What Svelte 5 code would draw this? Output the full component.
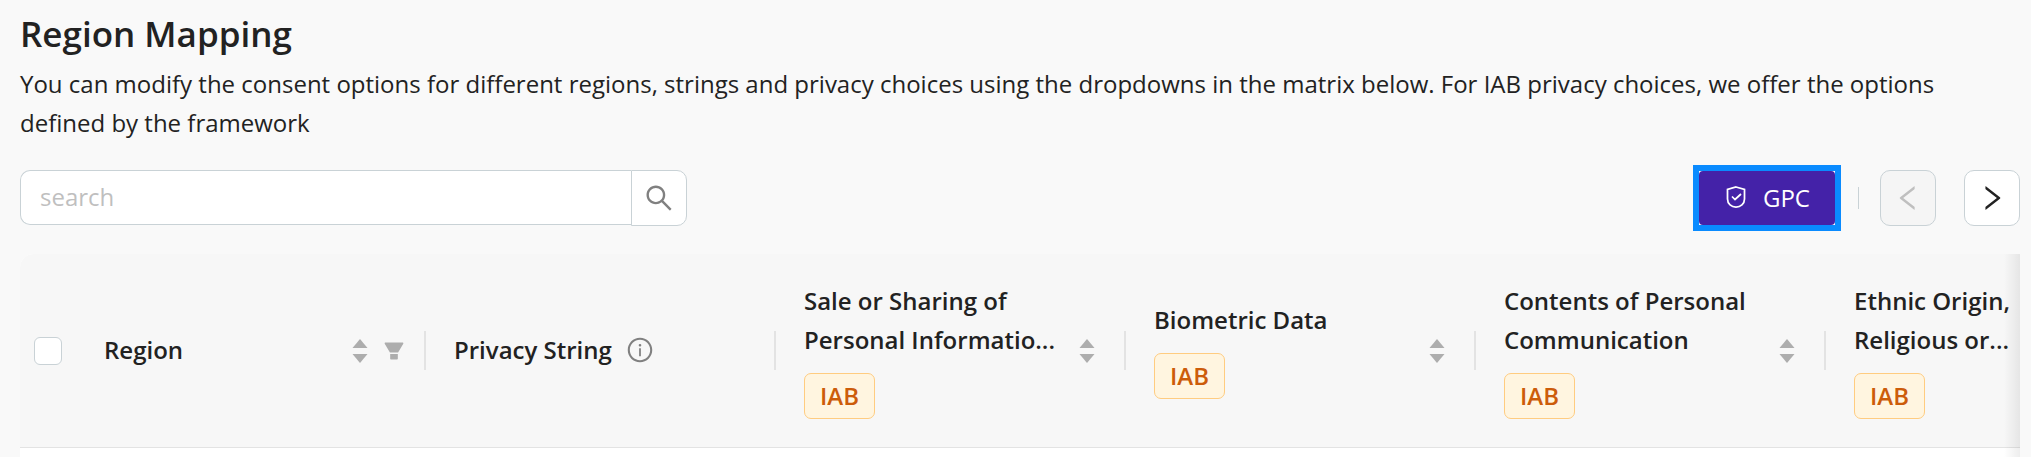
<script lang="ts">
	interface Column {
		title: string[];
		iab?: boolean;
		sortable?: boolean;
		filterable?: boolean;
		info?: boolean;
	}

	const columns: Column[] = [
		{ title: ['Region'], sortable: true, filterable: true },
		{ title: ['Privacy String'], info: true },
		{ title: ['Sale or Sharing of', 'Personal Informatio...'], iab: true, sortable: true },
		{ title: ['Biometric Data'], iab: true, sortable: true },
		{ title: ['Contents of Personal', 'Communication'], iab: true, sortable: true },
		{ title: ['Ethnic Origin,', 'Religious or...'], iab: true },
	];

	let query = $state('');
	let allSelected = $state(false);
</script>

<main class="page">
	<h1>Region Mapping</h1>
	<p class="description">
		You can modify the consent options for different regions, strings and privacy choices using the
		dropdowns in the matrix below. For IAB privacy choices, we offer the options defined by the
		framework
	</p>

	<div class="toolbar">
		<form class="search" role="search" onsubmit={(e) => e.preventDefault()}>
			<input type="text" placeholder="search" aria-label="Search" bind:value={query} />
			<button type="submit" aria-label="Search">
				<svg class="icon-search" viewBox="0 0 1024 1024" aria-hidden="true">
					<path d="M909.6 854.5L649.9 594.8C690.2 542.7 712 479 712 412c0-80.2-31.3-155.4-87.9-212.1-56.6-56.7-132-87.9-212.1-87.9s-155.5 31.3-212.1 87.9C143.2 256.5 112 331.8 112 412c0 80.1 31.3 155.5 87.9 212.1C256.5 680.8 331.8 712 412 712c67 0 130.6-21.8 182.7-62l259.7 259.6a8.2 8.2 0 0011.6 0l43.6-43.5a8.2 8.2 0 000-11.6zM570.4 570.4C528 612.7 471.8 636 412 636s-116-23.3-158.4-65.6C211.3 528 188 471.8 188 412s23.3-116.1 65.6-158.4C296 211.3 352.2 188 412 188s116.1 23.2 158.4 65.6S636 352.2 636 412s-23.3 116.1-65.6 158.4z" />
				</svg>
			</button>
		</form>

		<div class="actions">
			<div class="highlight">
				<button type="button" class="primary">
					<svg class="icon-shield" viewBox="0 0 24 24" aria-hidden="true">
						<path d="M12 2 20.5 4.5V14C20.5 19 16.5 22 12 22S3.5 19 3.5 14V4.5Z" />
						<path d="M8 11.5 11 14.5 17 9" />
					</svg>
					GPC
				</button>
			</div>
			<span class="divider"></span>
			<button type="button" class="pager" aria-label="Previous columns" disabled>
				<svg viewBox="0 0 1024 1024" aria-hidden="true">
					<path d="M724 218.3V141c0-6.7-7.7-10.4-12.9-6.3L260.3 486.8a31.86 31.86 0 000 50.3l450.8 352.1c5.3 4.1 12.9.4 12.9-6.3v-77.3c0-4.9-2.3-9.6-6.1-12.6l-360-281 360-281.1c3.8-3 6.1-7.7 6.1-12.6z" />
				</svg>
			</button>
			<button type="button" class="pager" aria-label="Next columns">
				<svg viewBox="0 0 1024 1024" aria-hidden="true">
					<path d="M765.7 486.8L314.9 134.7A7.97 7.97 0 00302 141v77.3c0 4.9 2.3 9.6 6.1 12.6l360 281.1-360 281.1c-3.9 3-6.1 7.7-6.1 12.6V883c0 6.7 7.7 10.4 12.9 6.3l450.8-352.1a31.96 31.96 0 000-50.4z" />
				</svg>
			</button>
		</div>
	</div>

	<div class="matrix">
		<table>
			<thead>
				<tr>
					<th class="select" scope="col">
						<input type="checkbox" aria-label="Select all regions" bind:checked={allSelected} />
					</th>
					{#each columns as column}
						<th scope="col">
							<div class="cell" class:filterable={column.filterable}>
								<div class="label">
									<div class="heading">
										<span>
											{#each column.title as line}
												<span class="line">{line}</span>
											{/each}
										</span>
										{#if column.info}
											<svg class="icon-info" viewBox="0 0 1024 1024" aria-hidden="true">
												<path d="M512 64C264.6 64 64 264.6 64 512s200.6 448 448 448 448-200.6 448-448S759.4 64 512 64zm0 820c-205.4 0-372-166.6-372-372s166.6-372 372-372 372 166.6 372 372-166.6 372-372 372z" />
												<path d="M464 336a48 48 0 1096 0 48 48 0 10-96 0zm72 112h-48c-4.4 0-8 3.6-8 8v272c0 4.4 3.6 8 8 8h48c4.4 0 8-3.6 8-8V456c0-4.4-3.6-8-8-8z" />
											</svg>
										{/if}
									</div>
									{#if column.iab}
										<span class="tag">IAB</span>
									{/if}
								</div>
								{#if column.sortable}
									<button type="button" class="tool" aria-label="Sort by {column.title.join(' ')}">
										<svg class="icon-sort" viewBox="0 0 16 24" aria-hidden="true">
											<path d="M8 0 15.5 9H.5Z" />
											<path d="M8 24 15.5 15H.5Z" />
										</svg>
									</button>
								{/if}
								{#if column.filterable}
									<button type="button" class="tool" aria-label="Filter by {column.title.join(' ')}">
										<svg class="icon-filter" viewBox="0 0 1024 1024" aria-hidden="true">
											<path d="M349 838c0 17.7 14.2 32 31.8 32h262.4c17.6 0 31.8-14.3 31.8-32V642H349v196zm531.1-684H143.9c-24.5 0-39.8 26.7-27.5 48l221.3 376h348.8l221.3-376c12.1-21.3-3.2-48-27.7-48z" />
										</svg>
									</button>
								{/if}
							</div>
						</th>
					{/each}
				</tr>
			</thead>
		</table>
	</div>
</main>

<style>
	:global(body) {
		background: #f9f9f9;
	}

	.page {
		box-sizing: border-box;
		min-height: 100vh;
		display: flex;
		flex-direction: column;
		padding: 9px 11px 0 20px;
		color: #222;
		font-family: 'Open Sans', sans-serif;
		font-size: 24px;
		line-height: 39px;
	}

	h1 {
		margin: 0;
		font-size: 35px;
		font-weight: 600;
		line-height: 50px;
	}

	.description {
		margin: 5px 0 23px;
	}

	button,
	input {
		box-sizing: border-box;
		margin: 0;
		font: inherit;
	}

	svg {
		display: block;
		fill: currentColor;
	}

	.toolbar {
		display: flex;
		align-items: center;
		justify-content: space-between;
		margin-bottom: 23px;
	}

	.search {
		display: flex;
		align-items: flex-start;
		width: 667px;
	}

	.search input {
		flex: 1;
		min-width: 0;
		height: 55px;
		padding: 0 19px 2px;
		border: 1px solid #c9d2d6;
		border-right: 0;
		border-radius: 10px 0 0 10px;
		background: #fff;
		color: #222;
	}

	.search input::placeholder {
		color: #bfbfbf;
		opacity: 1;
	}

	.search button {
		display: flex;
		align-items: center;
		justify-content: center;
		width: 56px;
		height: 56px;
		padding: 0;
		border: 1px solid #c9d2d6;
		border-radius: 0 10px 10px 0;
		background: #fff;
		color: #808080;
		cursor: pointer;
	}

	.icon-search {
		width: 32px;
		height: 32px;
	}

	.actions {
		display: flex;
		align-items: center;
	}

	.highlight {
		border: 6px solid #0a8bff;
		background: #fff;
	}

	.primary {
		display: flex;
		align-items: center;
		gap: 15px;
		height: 54px;
		padding: 0 25px 2px;
		border: 0;
		border-radius: 4px;
		background: #4422a8;
		color: #fff;
		cursor: pointer;
	}

	.icon-shield {
		width: 24px;
		height: 24px;
		fill: none;
		stroke: currentColor;
		stroke-width: 1.75;
	}

	.divider {
		width: 1px;
		height: 22px;
		margin: 0 21px 0 17px;
		background: #c9d2d6;
	}

	.pager {
		display: flex;
		align-items: center;
		justify-content: center;
		width: 56px;
		height: 56px;
		padding: 0;
		border: 1px solid #c9d2d6;
		border-radius: 10px;
		background: #fff;
		color: #222;
		cursor: pointer;
	}

	.pager + .pager {
		margin-left: 28px;
	}

	.pager:disabled {
		background: #f5f5f5;
		color: #bfbfbf;
		cursor: not-allowed;
	}

	.pager svg {
		width: 32px;
		height: 32px;
	}

	.matrix {
		position: relative;
		flex: 1;
		min-height: 203px;
		overflow: hidden;
		border-radius: 14px 0 0 0;
		background: #fff;
	}

	/* edge shadow: more columns continue to the right */
	.matrix::after {
		content: '';
		position: absolute;
		inset: 0 0 0 auto;
		width: 16px;
		background: linear-gradient(to left, rgba(0, 0, 0, 0.07), transparent);
		pointer-events: none;
	}

	table {
		width: 2156px;
		table-layout: fixed;
		border-collapse: separate;
		border-spacing: 0;
	}

	th {
		height: 193px;
		padding: 0;
		border-bottom: 1px solid #e3e3e3;
		background: #f7f7f7;
		font-weight: 600;
		text-align: left;
	}

	/* short rule between neighbouring column headings */
	th:not(.select) {
		background: linear-gradient(#e3e3e3, #e3e3e3) right center / 2px 39px no-repeat #f7f7f7;
	}

	.select {
		width: 56px;
	}

	.select input {
		display: block;
		appearance: none;
		width: 28px;
		height: 28px;
		margin: 0 auto;
		border: 1px solid #c9d2d6;
		border-radius: 6px;
		background: #fff;
	}

	.select input:checked {
		background: #4422a8;
	}

	.cell {
		display: flex;
		align-items: center;
		gap: 14px;
		padding: 0 31px 0 28px;
	}

	.cell.filterable {
		padding-right: 20px;
	}

	.label {
		flex: 1;
		display: flex;
		flex-direction: column;
		align-items: flex-start;
		gap: 14px;
		padding-bottom: 2px;
		white-space: nowrap;
	}

	.heading {
		display: flex;
		align-items: center;
		gap: 14px;
	}

	.line {
		display: block;
	}

	.tag {
		padding: 3px 15px;
		border: 1px solid #ffcc80;
		border-radius: 7px;
		background: #fff5e0;
		color: #cc5c0a;
		line-height: 38px;
	}

	.tool {
		padding: 0;
		border: 0;
		background: none;
		color: #adadad;
		cursor: pointer;
	}

	.icon-sort {
		width: 16px;
		height: 24px;
	}

	.icon-filter {
		width: 24px;
		height: 24px;
	}

	.icon-info {
		width: 28px;
		height: 28px;
		color: #808080;
	}
</style>
